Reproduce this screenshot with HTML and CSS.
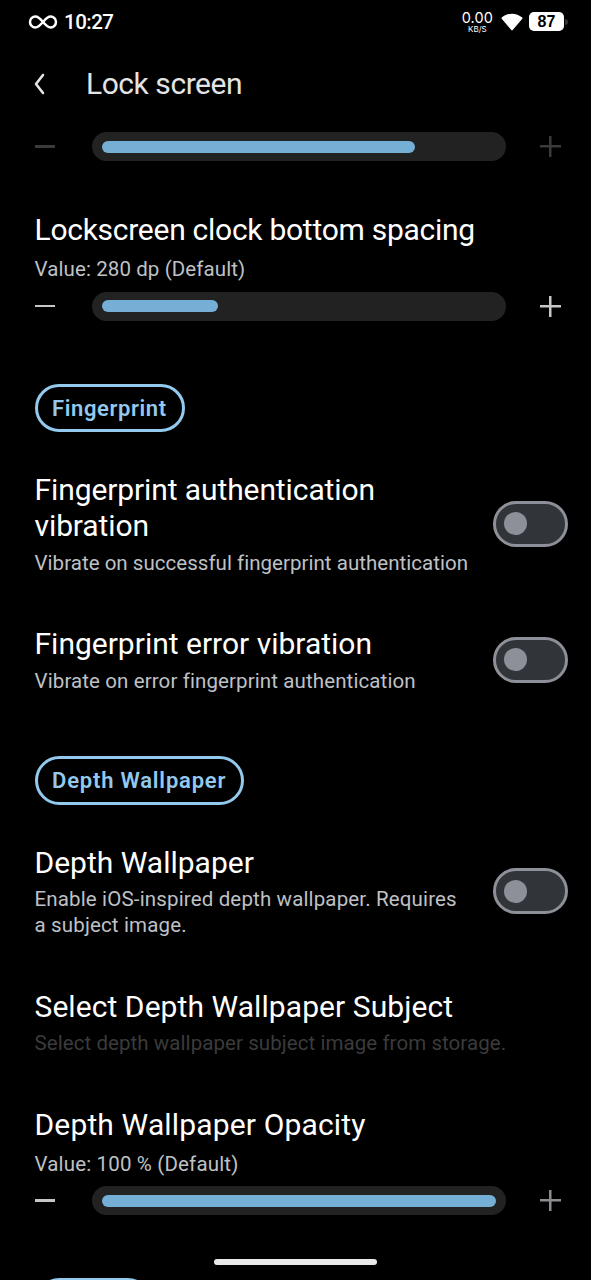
FILE: index.html
```
<!DOCTYPE html>
<html lang="en">
<head>
<meta charset="utf-8">
<title>Lock screen</title>
<link rel="stylesheet" href="styles.css">
</head>
<body>
<div class="screen">
  <div class="status">
    <svg class="infinity" width="30" height="16" viewBox="0 0 30 16" fill="none" stroke="#fff" stroke-width="2.5"><path d="M15 8C12 4.500 10.200 2.600 7.400 2.600a5.400 5.400 0 0 0 0 10.800C10.200 13.400 12 11.500 15 8S19.800 2.600 22.600 2.600a5.400 5.400 0 0 1 0 10.800C19.800 13.400 18 11.500 15 8Z"/></svg>
    <span class="time">10:27</span>
    <div class="speed"><span class="rate">0.00</span><span class="unit">KB/S</span></div>
    <svg class="wifi" width="22" height="18" viewBox="0 0 22 18" fill="#fff"><path d="M.8 4.600C3.700 2 7.200.7 11 .7s7.300 1.300 10.200 3.900c.4.400.4.800.1 1.200L11.700 17c-.4.500-1 .5-1.400 0L.7 5.800c-.3-.4-.3-.8.1-1.200Z"/></svg>
    <span class="battery">87</span>
    <span class="nub"></span>
  </div>

  <header class="header">
    <svg class="back" width="14" height="22" viewBox="0 0 14 22" fill="none" stroke="#e4e4e4" stroke-width="2.6" stroke-linecap="round" stroke-linejoin="round"><path d="M11 2 4 11l7 9"/></svg>
    <h1 class="heading">Lock screen</h1>
  </header>

  <main class="list">
    <div class="slider off">
      <span class="minus"></span>
      <div class="track"><div class="fill" style="width:313px"></div></div>
      <span class="plus"></span>
    </div>

    <section class="item">
      <h2 class="title t-spacing">Lockscreen clock bottom spacing</h2>
      <p class="value v-spacing">Value: 280 dp (Default)</p>
      <div class="slider">
        <span class="minus"></span>
        <div class="track"><div class="fill" style="width:116px"></div></div>
        <span class="plus"></span>
      </div>
    </section>

    <div class="chip c-finger">Fingerprint</div>

    <section class="item row first">
      <div class="text">
        <h2 class="title t-auth">Fingerprint authentication<br>vibration</h2>
        <p class="desc d-auth">Vibrate on successful fingerprint authentication</p>
      </div>
      <span class="toggle"></span>
    </section>

    <section class="item row">
      <div class="text">
        <h2 class="title t-error">Fingerprint error vibration</h2>
        <p class="desc d-error">Vibrate on error fingerprint authentication</p>
      </div>
      <span class="toggle"></span>
    </section>

    <div class="chip c-depth">Depth Wallpaper</div>

    <section class="item row first">
      <div class="text">
        <h2 class="title t-depth">Depth Wallpaper</h2>
        <p class="desc d-depth">Enable iOS-inspired depth wallpaper. Requires<br>a subject image.</p>
      </div>
      <span class="toggle"></span>
    </section>

    <section class="item">
      <h2 class="title t-select">Select Depth Wallpaper Subject</h2>
      <p class="desc dim d-select">Select depth wallpaper subject image from storage.</p>
    </section>

    <section class="item">
      <h2 class="title t-opacity">Depth Wallpaper Opacity</h2>
      <p class="value v-opacity">Value: 100 % (Default)</p>
      <div class="slider max">
        <span class="minus"></span>
        <div class="track"><div class="fill" style="width:394px"></div></div>
        <span class="plus"></span>
      </div>
    </section>

    <div class="chip c-next"></div>
  </main>
  <div class="navbar"></div>
</div>
</body>
</html>
```
FILE: styles.css
```
* { box-sizing: border-box; }
body { margin: 0; background: #000; }
h1, h2, p { margin: 0; font-weight: 400; white-space: nowrap; }

.screen {
  position: relative;
  width: 591px;
  height: 1280px;
  overflow: hidden;
  background: #000;
  color: #fff;
  font-family: Roboto, "Open Sans", sans-serif;
}

/* Status bar */
.status { display: flex; align-items: center; height: 43px; padding: 0 23px 0 28px; }
.infinity { margin-top: 1px; }
.time { margin-left: 6px; font-size: 20.500px; font-weight: 500; line-height: 24px; letter-spacing: -.5px; }
.speed { display: flex; flex-direction: column; align-items: center; margin-left: auto; }
.rate { font-family: Inter, sans-serif; font-size: 14.500px; font-weight: 400; line-height: 14px; letter-spacing: .1px; }
.unit { font-family: Inter, sans-serif; font-size: 8px; line-height: 8px; }
.wifi { margin-left: 8px; }
.battery {
  width: 35px; height: 19px; margin-left: 6px;
  border-radius: 5px; background: #fff; color: #000;
  font: 700 16px/19px "Liberation Sans", sans-serif; text-align: center;
}
.nub { width: 3px; height: 6px; margin-left: 1px; border-radius: 0 3px 3px 0; background: #333; }

/* Title bar */
.header { display: flex; align-items: center; height: 81px; padding: 0 32px; }
.heading { margin-left: 40px; font-size: 30px; line-height: 36px; letter-spacing: -.45px; color: #e4e4e4; }

/* Settings */
.list { padding: 8px 23px 0 34.500px; }
.item { margin-top: 51px; }
.item + .item { margin-top: 50.500px; }
.item.first { margin-top: 40px; }
.row { display: flex; align-items: center; justify-content: space-between; }
.title { font-size: 30px; line-height: 36px; }
.desc, .value { font-size: 20.500px; line-height: 26px; color: #bfc1c5; }
.desc { margin-top: 5.500px; }
.value { margin-top: 8px; }
.dim { color: #3b3b3b; }

.t-spacing { letter-spacing: -.27px; }
.t-auth { letter-spacing: -.1px; }
.t-select { letter-spacing: .07px; }
.t-opacity { letter-spacing: .15px; }
.v-spacing { letter-spacing: .1px; }
.v-opacity { letter-spacing: .16px; }
.d-auth { letter-spacing: .03px; }
.d-error { letter-spacing: .11px; }
.d-depth { letter-spacing: .15px; }
.d-select { letter-spacing: .07px; }

.chip {
  width: 150.500px; height: 48.500px; margin-top: 63px; padding-left: 14.500px;
  border: 3px solid #94c9ee; border-radius: 25px;
  color: #94c9ee; font-size: 22px; font-weight: 600; line-height: 43px; letter-spacing: .6px;
  white-space: nowrap;
}
.c-depth { width: 209.500px; margin-top: 62.500px; letter-spacing: .8px; }
.c-next { width: 117px; }

/* Slider with step buttons */
.slider { display: flex; align-items: center; height: 29px; color: #c6c6c8; }
.item .slider { margin-top: 9.500px; }
.off { color: #3a3a3a; }
.minus { width: 20.500px; height: 2.500px; background: currentColor; }
.track { display: flex; align-items: center; width: 414px; height: 29px; margin-left: 37px; padding: 0 10px; border-radius: 14.500px; background: #222; }
.fill { height: 12px; border-radius: 6px; background: #75afd6; }
.plus {
  width: 21px; height: 21px; margin-left: 34px;
  background: linear-gradient(currentColor, currentColor) center / 100% 2.500px no-repeat,
              linear-gradient(currentColor, currentColor) center / 2.500px 100% no-repeat;
}
.max .plus { color: #8c8c90; }

.toggle {
  display: flex; align-items: center; flex: none;
  width: 75px; height: 46px; padding-left: 8px;
  border: 3px solid #8e9099; border-radius: 23px; background: #313439;
}
.toggle::before { content: ""; width: 23px; height: 23px; border-radius: 50%; background: #8e9099; }

/* Gesture handle floats over the list */
.navbar { position: absolute; left: 214px; bottom: 15px; width: 162.500px; height: 6px; border-radius: 3px; background: #e9e9e9; }
```
